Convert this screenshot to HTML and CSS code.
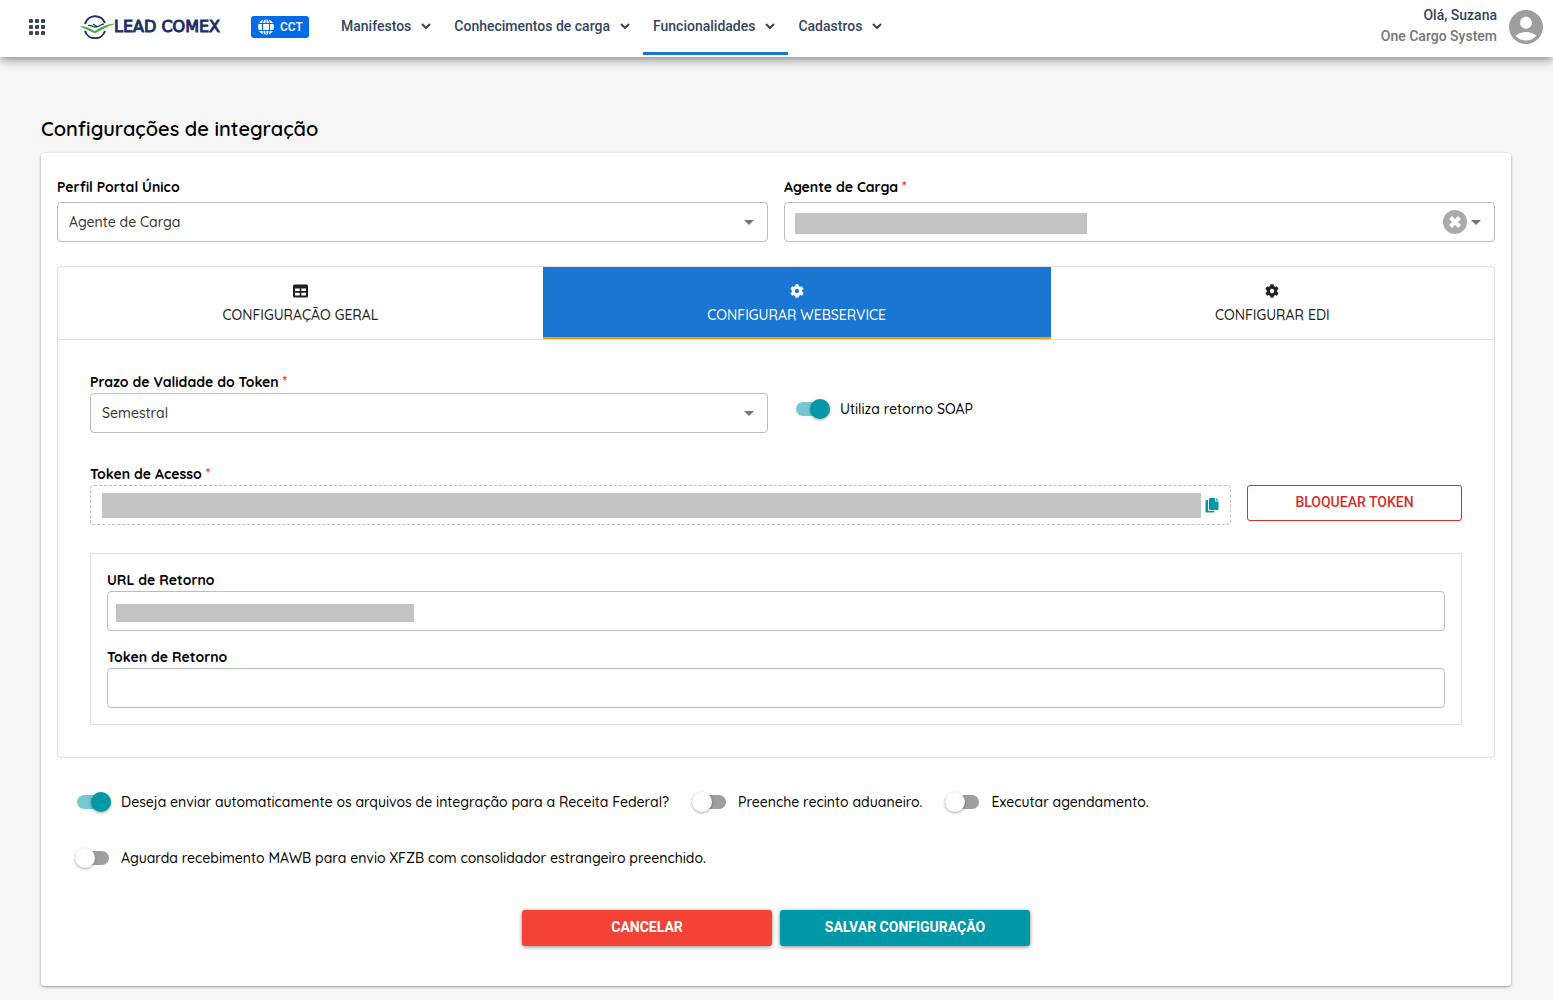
FILE: index.html
```html
<!DOCTYPE html>
<html lang="pt-BR">
<head>
<meta charset="utf-8">
<meta name="viewport" content="width=device-width, initial-scale=1">
<title>Configurações de integração</title>
<link rel="stylesheet" href="styles.css">
</head>
<body>
<header class="topbar">
  <button class="apps" type="button" aria-label="Aplicativos">
    <svg width="16" height="16" viewBox="0 0 16 16" fill="currentColor"><rect width="4" height="4" rx="1"/><rect x="6" width="4" height="4" rx="1"/><rect x="12" width="4" height="4" rx="1"/><rect y="6" width="4" height="4" rx="1"/><rect x="6" y="6" width="4" height="4" rx="1"/><rect x="12" y="6" width="4" height="4" rx="1"/><rect y="12" width="4" height="4" rx="1"/><rect x="6" y="12" width="4" height="4" rx="1"/><rect x="12" y="12" width="4" height="4" rx="1"/></svg>
  </button>
  <a class="logo" href="#">
    <svg width="33" height="24" viewBox="0 0 33 24" fill="none"><path d="M4 9A10.500 10.500 0 0 1 24 8M4 16a10.500 10.500 0 0 0 20 0" stroke="#1d2f66" stroke-width="2"/><path d="M0 11.500c5 0 9 2 13.500 5C19 13 25 9.500 33 9c-7 2-13 6-19 9C9 16 5 13.500 0 11.500z" fill="#3aaa35" stroke="#3aaa35" stroke-width=".6"/><path d="M7 10.500c3-1 5 2 8 1.500 3 0 5-3 8-3M12 9l4 2.500" stroke="#1d2f66" stroke-width="1.300"/><path d="M12 11.500l3 1" stroke="#3aaa35"/></svg>
    <span>LEAD COMEX</span>
  </a>
  <a class="module" href="#">
    <svg width="16" height="16" viewBox="0 0 16 16" fill="#fff"><rect x="5" y="5" width="6" height="6"/><path d="M5.200 4C5.600 2 6.500.5 7.500.1V4zM8.500 4V.1c1 .4 1.900 1.900 2.300 3.900zM4 5v6H.600a8 8 0 0 1 0-6zM12 5h3.400a8 8 0 0 1 0 6H12zM5.200 12h2.300v3.900c-1-.4-1.900-1.900-2.300-3.900zM8.500 12h2.300c-.4 2-1.300 3.500-2.300 3.900zM4.200 4H1.100A8 8 0 0 1 5.400.500 10 10 0 0 0 4.200 4zM11.800 4h3.100A8 8 0 0 0 10.600.500 10 10 0 0 1 11.800 4zM4.200 12H1.100a8 8 0 0 0 4.300 3.500A10 10 0 0 1 4.200 12zM11.800 12h3.100a8 8 0 0 1-4.300 3.500 10 10 0 0 0 1.200-3.500z"/></svg>
    <span>CCT</span>
  </a>
  <nav class="menu">
    <a href="#">Manifestos <svg width="10" height="6" viewBox="0 0 10 6"><path d="M1 1l4 4 4-4"/></svg></a>
    <a href="#">Conhecimentos de carga <svg width="10" height="6" viewBox="0 0 10 6"><path d="M1 1l4 4 4-4"/></svg></a>
    <a href="#" class="current">Funcionalidades <svg width="10" height="6" viewBox="0 0 10 6"><path d="M1 1l4 4 4-4"/></svg></a>
    <a href="#">Cadastros <svg width="10" height="6" viewBox="0 0 10 6"><path d="M1 1l4 4 4-4"/></svg></a>
  </nav>
  <div class="user">
    <div class="who"><span class="name">Olá, Suzana</span><span>One Cargo System</span></div>
    <svg width="34" height="34" viewBox="2 2 20 20" fill="#9e9e9e"><path d="M12 2C6.480 2 2 6.480 2 12s4.480 10 10 10 10-4.480 10-10S17.520 2 12 2zm0 4c1.930 0 3.500 1.570 3.500 3.500S13.930 13 12 13s-3.500-1.570-3.500-3.500S10.070 6 12 6zm0 14c-2.030 0-4.430-.820-6.140-2.880C7.550 15.800 9.680 15 12 15s4.450.800 6.140 2.120C16.430 19.180 14.030 20 12 20z"/></svg>
  </div>
</header>

<main class="page">
  <h1>Configurações de integração</h1>
  <form class="card">
    <div class="row">
      <div class="field top">
        <label for="perfil">Perfil Portal Único</label>
        <div class="select"><select id="perfil"><option>Agente de Carga</option></select></div>
      </div>
      <div class="field top">
        <label for="agente">Agente de Carga <i>*</i></label>
        <div class="select">
          <select id="agente" class="masked-agent"><option></option></select>
          <button class="clear" type="button" aria-label="Limpar"><svg width="24" height="24" viewBox="0 0 24 24"><circle cx="12" cy="12" r="12" fill="#ababab"/><path d="M7.500 7.500l9 9M16.500 7.500l-9 9" stroke="#fff" stroke-width="4"/></svg></button>
        </div>
      </div>
    </div>

    <section class="tabs">
      <div class="tablist" role="tablist">
        <button type="button" role="tab"><svg width="15" height="13" viewBox="0 0 15 13"><path fill="currentColor" fill-rule="evenodd" d="M1.500 0h12A1.500 1.500 0 0 1 15 1.500v10a1.500 1.500 0 0 1-1.500 1.500h-12A1.500 1.500 0 0 1 0 11.500v-10A1.500 1.500 0 0 1 1.500 0zM2 4v2.500h4.700V4zM8.300 4v2.500H13V4zM2 8.200V11h4.700V8.200zM8.300 8.200V11H13V8.200z"/></svg>CONFIGURAÇÃO GERAL</button>
        <button type="button" role="tab" class="active" aria-selected="true"><svg width="14" height="14" viewBox="0 0 512 512"><path fill="currentColor" d="M487.400 315.700l-42.600-24.600c4.300-23.200 4.300-47 0-70.200l42.600-24.600c4.900-2.800 7.100-8.600 5.500-14-11.100-35.600-30-67.800-54.700-94.600-3.800-4.100-10-5.100-14.800-2.300L380.800 110c-17.900-15.400-38.500-27.300-60.800-35.100V25.800c0-5.600-3.900-10.500-9.400-11.700-36.700-8.200-74.300-7.800-109.200 0-5.500 1.200-9.400 6.100-9.400 11.700V75c-22.200 7.900-42.800 19.800-60.800 35.100L88.700 85.500c-4.900-2.800-11-1.900-14.800 2.300-24.700 26.700-43.600 58.900-54.700 94.600-1.700 5.400.6 11.200 5.500 14L67.300 221c-4.300 23.200-4.300 47 0 70.200l-42.600 24.600c-4.900 2.800-7.100 8.600-5.500 14 11.100 35.600 30 67.800 54.700 94.600 3.800 4.100 10 5.100 14.800 2.300l42.600-24.600c17.900 15.400 38.500 27.300 60.800 35.100v49.200c0 5.600 3.900 10.500 9.400 11.700 36.700 8.200 74.300 7.800 109.200 0 5.500-1.200 9.400-6.100 9.400-11.700v-49.200c22.200-7.900 42.800-19.800 60.800-35.100l42.600 24.600c4.900 2.800 11 1.900 14.800-2.300 24.700-26.700 43.600-58.900 54.700-94.600 1.500-5.500-.7-11.300-5.600-14.100zM256 336c-44.100 0-80-35.900-80-80s35.900-80 80-80 80 35.900 80 80-35.900 80-80 80z"/></svg>CONFIGURAR WEBSERVICE</button>
        <button type="button" role="tab"><svg width="14" height="14" viewBox="0 0 512 512"><path fill="currentColor" d="M487.400 315.700l-42.600-24.600c4.300-23.200 4.300-47 0-70.200l42.600-24.600c4.900-2.800 7.100-8.600 5.500-14-11.100-35.600-30-67.800-54.700-94.600-3.800-4.100-10-5.100-14.800-2.300L380.800 110c-17.900-15.400-38.500-27.300-60.800-35.100V25.800c0-5.600-3.900-10.500-9.400-11.700-36.700-8.200-74.300-7.800-109.200 0-5.500 1.200-9.400 6.100-9.400 11.700V75c-22.200 7.900-42.800 19.800-60.800 35.100L88.700 85.500c-4.900-2.800-11-1.900-14.800 2.300-24.700 26.700-43.600 58.900-54.700 94.600-1.700 5.400.6 11.200 5.500 14L67.300 221c-4.300 23.200-4.300 47 0 70.200l-42.600 24.600c-4.900 2.800-7.100 8.600-5.500 14 11.100 35.600 30 67.800 54.700 94.600 3.800 4.100 10 5.100 14.800 2.300l42.600-24.600c17.900 15.400 38.500 27.300 60.800 35.100v49.200c0 5.600 3.900 10.500 9.400 11.700 36.700 8.200 74.300 7.800 109.200 0 5.500-1.200 9.400-6.100 9.400-11.700v-49.200c22.200-7.900 42.800-19.800 60.800-35.100l42.600 24.600c4.900 2.800 11 1.900 14.800-2.300 24.700-26.700 43.600-58.900 54.700-94.600 1.500-5.500-.7-11.300-5.600-14.100zM256 336c-44.100 0-80-35.900-80-80s35.900-80 80-80 80 35.900 80 80-35.900 80-80 80z"/></svg>CONFIGURAR EDI</button>
      </div>
      <div class="panel" role="tabpanel">
        <div class="validity">
          <div class="field">
            <label for="prazo">Prazo de Validade do Token <i>*</i></label>
            <div class="select"><select id="prazo"><option>Semestral</option></select></div>
          </div>
          <label class="switch"><input type="checkbox" checked>Utiliza retorno SOAP</label>
        </div>
        <div class="access">
          <div class="field">
            <label for="token">Token de Acesso <i>*</i></label>
            <div class="token">
              <input id="token" type="text" readonly>
              <button type="button" aria-label="Copiar"><svg width="14" height="16" viewBox="0 0 14 16" fill="#0097a7"><path d="M5 1h5v3.500h3.500V12a1 1 0 0 1-1 1H5a1 1 0 0 1-1-1V2a1 1 0 0 1 1-1zM11 1l2.500 2.500H11z"/><path d="M1.500 3H3v10a1 1 0 0 0 1 1h5.500v.500a1 1 0 0 1-1 1h-7a1 1 0 0 1-1-1V4a1 1 0 0 1 1-1z"/></svg></button>
            </div>
          </div>
          <button class="btn outline" type="button">BLOQUEAR TOKEN</button>
        </div>
        <div class="return">
          <div class="field">
            <label for="url">URL de Retorno</label>
            <input class="text masked-url" id="url" type="text">
          </div>
          <div class="field">
            <label for="retorno">Token de Retorno</label>
            <input class="text" id="retorno" type="text">
          </div>
        </div>
      </div>
    </section>

    <div class="options">
      <div class="line">
        <label class="switch"><input type="checkbox" checked>Deseja enviar automaticamente os arquivos de integração para a Receita Federal?</label>
        <label class="switch"><input type="checkbox">Preenche recinto aduaneiro.</label>
        <label class="switch"><input type="checkbox">Executar agendamento.</label>
      </div>
      <div class="line">
        <label class="switch"><input type="checkbox">Aguarda recebimento MAWB para envio XFZB com consolidador estrangeiro preenchido.</label>
      </div>
    </div>

    <div class="actions">
      <button class="btn danger" type="button">CANCELAR</button>
      <button class="btn primary" type="submit">SALVAR CONFIGURAÇÃO</button>
    </div>
  </form>
</main>
</body>
</html>
```
FILE: styles.css
```css
* { box-sizing: border-box; }
body {
  margin: 0;
  background: #f6f6f6;
  color: #000;
  font: 500 14px/20px Quicksand, "Open Sans", sans-serif;
}
svg { display: block; flex: none; }
button, input, select { font: inherit; color: inherit; margin: 0; }
button { padding: 0; border: 0; background: none; cursor: pointer; }
a { color: inherit; text-decoration: none; }

/* top bar */
.topbar {
  position: relative;
  display: flex;
  align-items: flex-start;
  height: 57px;
  padding: 0 10px 0 29px;
  background: #fff;
  box-shadow: 0 2px 10px rgba(0, 0, 0, .5);
  font-family: Roboto, sans-serif;
  font-weight: 500;
}
.apps { margin-top: 19px; color: #37474f; }
.logo {
  display: flex;
  align-items: center;
  width: 140px;
  margin: 15px 30px 0 36px;
  color: #1d2f66;
  font: 16px/24px "DejaVu Sans", sans-serif;
  -webkit-text-stroke: 1px #1d2f66;
  white-space: nowrap;
}
.module {
  display: flex;
  align-items: center;
  gap: 6px;
  width: 58px;
  height: 22px;
  margin-top: 16px;
  padding-left: 7px;
  border-radius: 3px;
  background: #006be6;
  color: #fff;
  font-size: 12px;
}
.menu { display: flex; margin-left: 22px; color: #344563; }
.menu a {
  display: flex;
  align-items: center;
  gap: 10px;
  height: 55px;
  padding: 0 13px 0 10px;
  border-bottom: 3px solid transparent;
  white-space: nowrap;
}
.menu .current { border-color: #1976d2; }
.menu path { fill: none; stroke: currentColor; stroke-width: 2; }
.user { display: flex; gap: 12px; margin: 5px 0 0 auto; align-items: flex-end; }
.who { display: flex; flex-direction: column; align-items: flex-end; line-height: 21px; color: #757575; }
.user svg { margin-bottom: 3px; }
.name { color: #344563; }

/* page */
.page { padding: 60px 42px 14px 41px; }
h1 { margin: 0 0 12px; font-size: 20px; line-height: 24px; font-weight: 600; }
.card {
  padding: 24px 16px 40px;
  border-radius: 4px;
  background: #fff;
  box-shadow: 0 1px 3px rgba(0, 0, 0, .4);
}
.row { display: grid; grid-template-columns: 1fr 1fr; gap: 16px; }

/* fields */
.field { display: flex; flex-direction: column; gap: 1px; }
.field.top { gap: 5px; }
.field > label { font-weight: 700; }
.field i { color: #f00; font-style: normal; font-weight: 500; }
.select { position: relative; }
.select::after {
  content: "";
  position: absolute;
  right: 14px;
  top: 18px;
  border: 5px solid transparent;
  border-top-color: #757575;
  border-bottom: 0;
  pointer-events: none;
}
select, .text {
  display: block;
  width: 100%;
  height: 40px;
  padding: 0 11px;
  border: 1px solid #bdbdbd;
  border-radius: 4px;
  background: #fff no-repeat;
  color: #333;
  appearance: none;
}
.masked-agent {
  background-image: linear-gradient(#c3c3c3, #c3c3c3);
  background-size: 292px 21px;
  background-position: 10px 10px;
}
.masked-url {
  background-image: linear-gradient(#c3c3c3, #c3c3c3);
  background-size: 298px 18px;
  background-position: 8px 12px;
}
.clear { position: absolute; right: 28px; top: 8px; }

/* tabs */
.tabs { margin-top: 24px; border: 1px solid #e0e0e0; border-radius: 4px; }
.tablist { display: flex; border-bottom: 1px solid #e0e0e0; }
.tablist button {
  display: flex;
  flex: 1 1 auto;
  flex-direction: column;
  align-items: center;
  gap: 7px;
  height: 72px;
  padding-top: 17px;
  color: #212121;
}
.tablist svg { height: 14px; }
.tablist .active {
  background: #1976d2;
  color: #fff;
  border-bottom: 2px solid #ff9800;
}
.panel { padding: 32px; }
.validity { display: flex; gap: 26px; }
.validity .field { flex: 0 1 678px; }
.validity .switch { margin-top: 27px; align-self: flex-start; }
.access { display: flex; gap: 16px; margin: 31px 0 28px; }
.access .field { flex: 1; }
.access .btn { width: 215px; margin-top: 21px; }
.token {
  display: flex;
  align-items: center;
  gap: 4px;
  height: 40px;
  padding: 0 11px;
  border: 1px dashed #bdbdbd;
  border-radius: 4px;
}
.token input { flex: 1; min-width: 0; height: 25px; padding: 0; border: 0; background: #c3c3c3; }
.return { display: flex; flex-direction: column; gap: 16px; padding: 16px; border: 1px solid #e0e0e0; }

/* switches */
.switch { display: flex; align-items: center; gap: 10px; white-space: nowrap; }
.switch input {
  position: relative;
  flex: none;
  width: 36px;
  height: 20px;
  appearance: none;
}
.switch input::before {
  content: "";
  position: absolute;
  left: 0;
  top: 3px;
  width: 34px;
  height: 14px;
  border-radius: 7px;
  background: #9e9e9e;
}
.switch input::after {
  content: "";
  position: absolute;
  left: 0;
  top: 0;
  width: 20px;
  height: 20px;
  border-radius: 50%;
  background: #fff;
  box-shadow: 0 1px 3px rgba(0, 0, 0, .35);
}
.switch input:checked::before { left: 2px; background: #76c8d0; }
.switch input:checked::after { left: 16px; background: #0097a7; }
.options { display: flex; flex-direction: column; gap: 36px; margin: 34px 0 42px 18px; }
.line { display: flex; flex-wrap: wrap; gap: 23px; }

/* buttons */
.btn {
  height: 36px;
  padding-bottom: 2px;
  border-radius: 3px;
  font-family: Roboto, sans-serif;
  font-weight: 500;
}
.outline { border: 1px solid #d32f2f; color: #d32f2f; }
.actions { display: flex; justify-content: center; gap: 8px; }
.actions .btn { width: 250px; color: #fff; font-weight: 700; box-shadow: 0 1px 4px rgba(0, 0, 0, .45); }
.danger { background: #f44336; }
.primary { background: #0097a7; }
```
